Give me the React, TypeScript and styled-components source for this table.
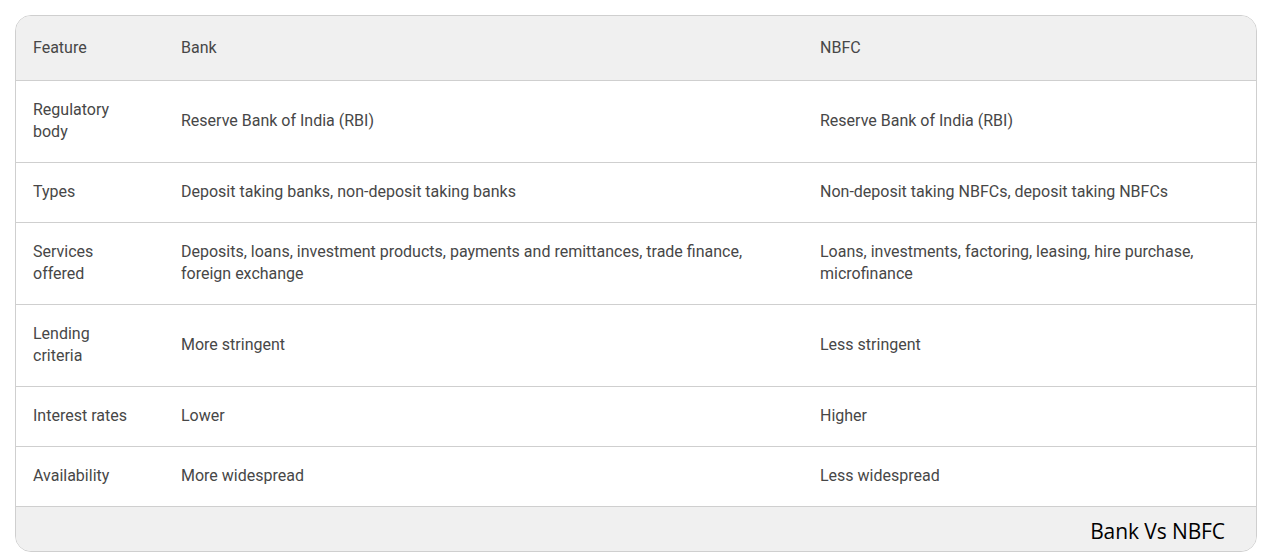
import React from "react";
import styled, { createGlobalStyle } from "styled-components";

const Global = createGlobalStyle`
  html, body { margin: 0; padding: 0; background: #ffffff; }
  body { font-family: Roboto, "Liberation Sans", Arial, sans-serif; }
`;

const Page = styled.div`
  padding: 15px 10px 8px 15px;
`;

const Card = styled.div`
  border: 1px solid #cfcfcf;
  border-radius: 16px;
  overflow: hidden;
  width: 1242px;
  box-sizing: border-box;
`;

const Row = styled.div<{ $head?: boolean }>`
  display: grid;
  grid-template-columns: 147px 639px 1fr;
  background: ${(p) => (p.$head ? "#f0f0f0" : "#ffffff")};
  border-bottom: 1px solid #cfcfcf;
  align-items: center;
`;

const Cell = styled.div<{ $head?: boolean }>`
  padding: ${(p) => (p.$head ? "21px 18px 21px 17px" : "18px 18px 19px 17px")};
  font-size: 16px;
  line-height: 22px;
  color: #474747;
  &:first-child { padding-right: 34px; }
  &:not(:first-child) { padding-left: 18px; }
`;

const Footer = styled.div`
  background: #f0f0f0;
  height: 44px;
  display: flex;
  justify-content: flex-end;
  align-items: flex-end;
  padding: 0 31px 6px 0;
  box-sizing: border-box;
`;

const Caption = styled.span`
  font-family: "Open Sans", "Noto Sans", sans-serif;
  font-size: 21px;
  line-height: 28px;
  color: #000;
  letter-spacing: -0.1px;
`;

const rows: [string, string, string][] = [
  ["Regulatory body", "Reserve Bank of India (RBI)", "Reserve Bank of India (RBI)"],
  ["Types", "Deposit taking banks, non-deposit taking banks", "Non-deposit taking NBFCs, deposit taking NBFCs"],
  [
    "Services offered",
    "Deposits, loans, investment products, payments and remittances, trade finance, foreign exchange",
    "Loans, investments, factoring, leasing, hire purchase, microfinance",
  ],
  ["Lending criteria", "More stringent", "Less stringent"],
  ["Interest rates", "Lower", "Higher"],
  ["Availability", "More widespread", "Less widespread"],
];

export default function App() {
  return (
    <>
      <Global />
      <Page>
        <Card>
          <Row $head>
            <Cell $head>Feature</Cell>
            <Cell $head>Bank</Cell>
            <Cell $head>NBFC</Cell>
          </Row>
          {rows.map((r) => (
            <Row key={r[0]}>
              <Cell>{r[0]}</Cell>
              <Cell>{r[1]}</Cell>
              <Cell>{r[2]}</Cell>
            </Row>
          ))}
          <Footer>
            <Caption>Bank Vs NBFC</Caption>
          </Footer>
        </Card>
      </Page>
    </>
  );
}
